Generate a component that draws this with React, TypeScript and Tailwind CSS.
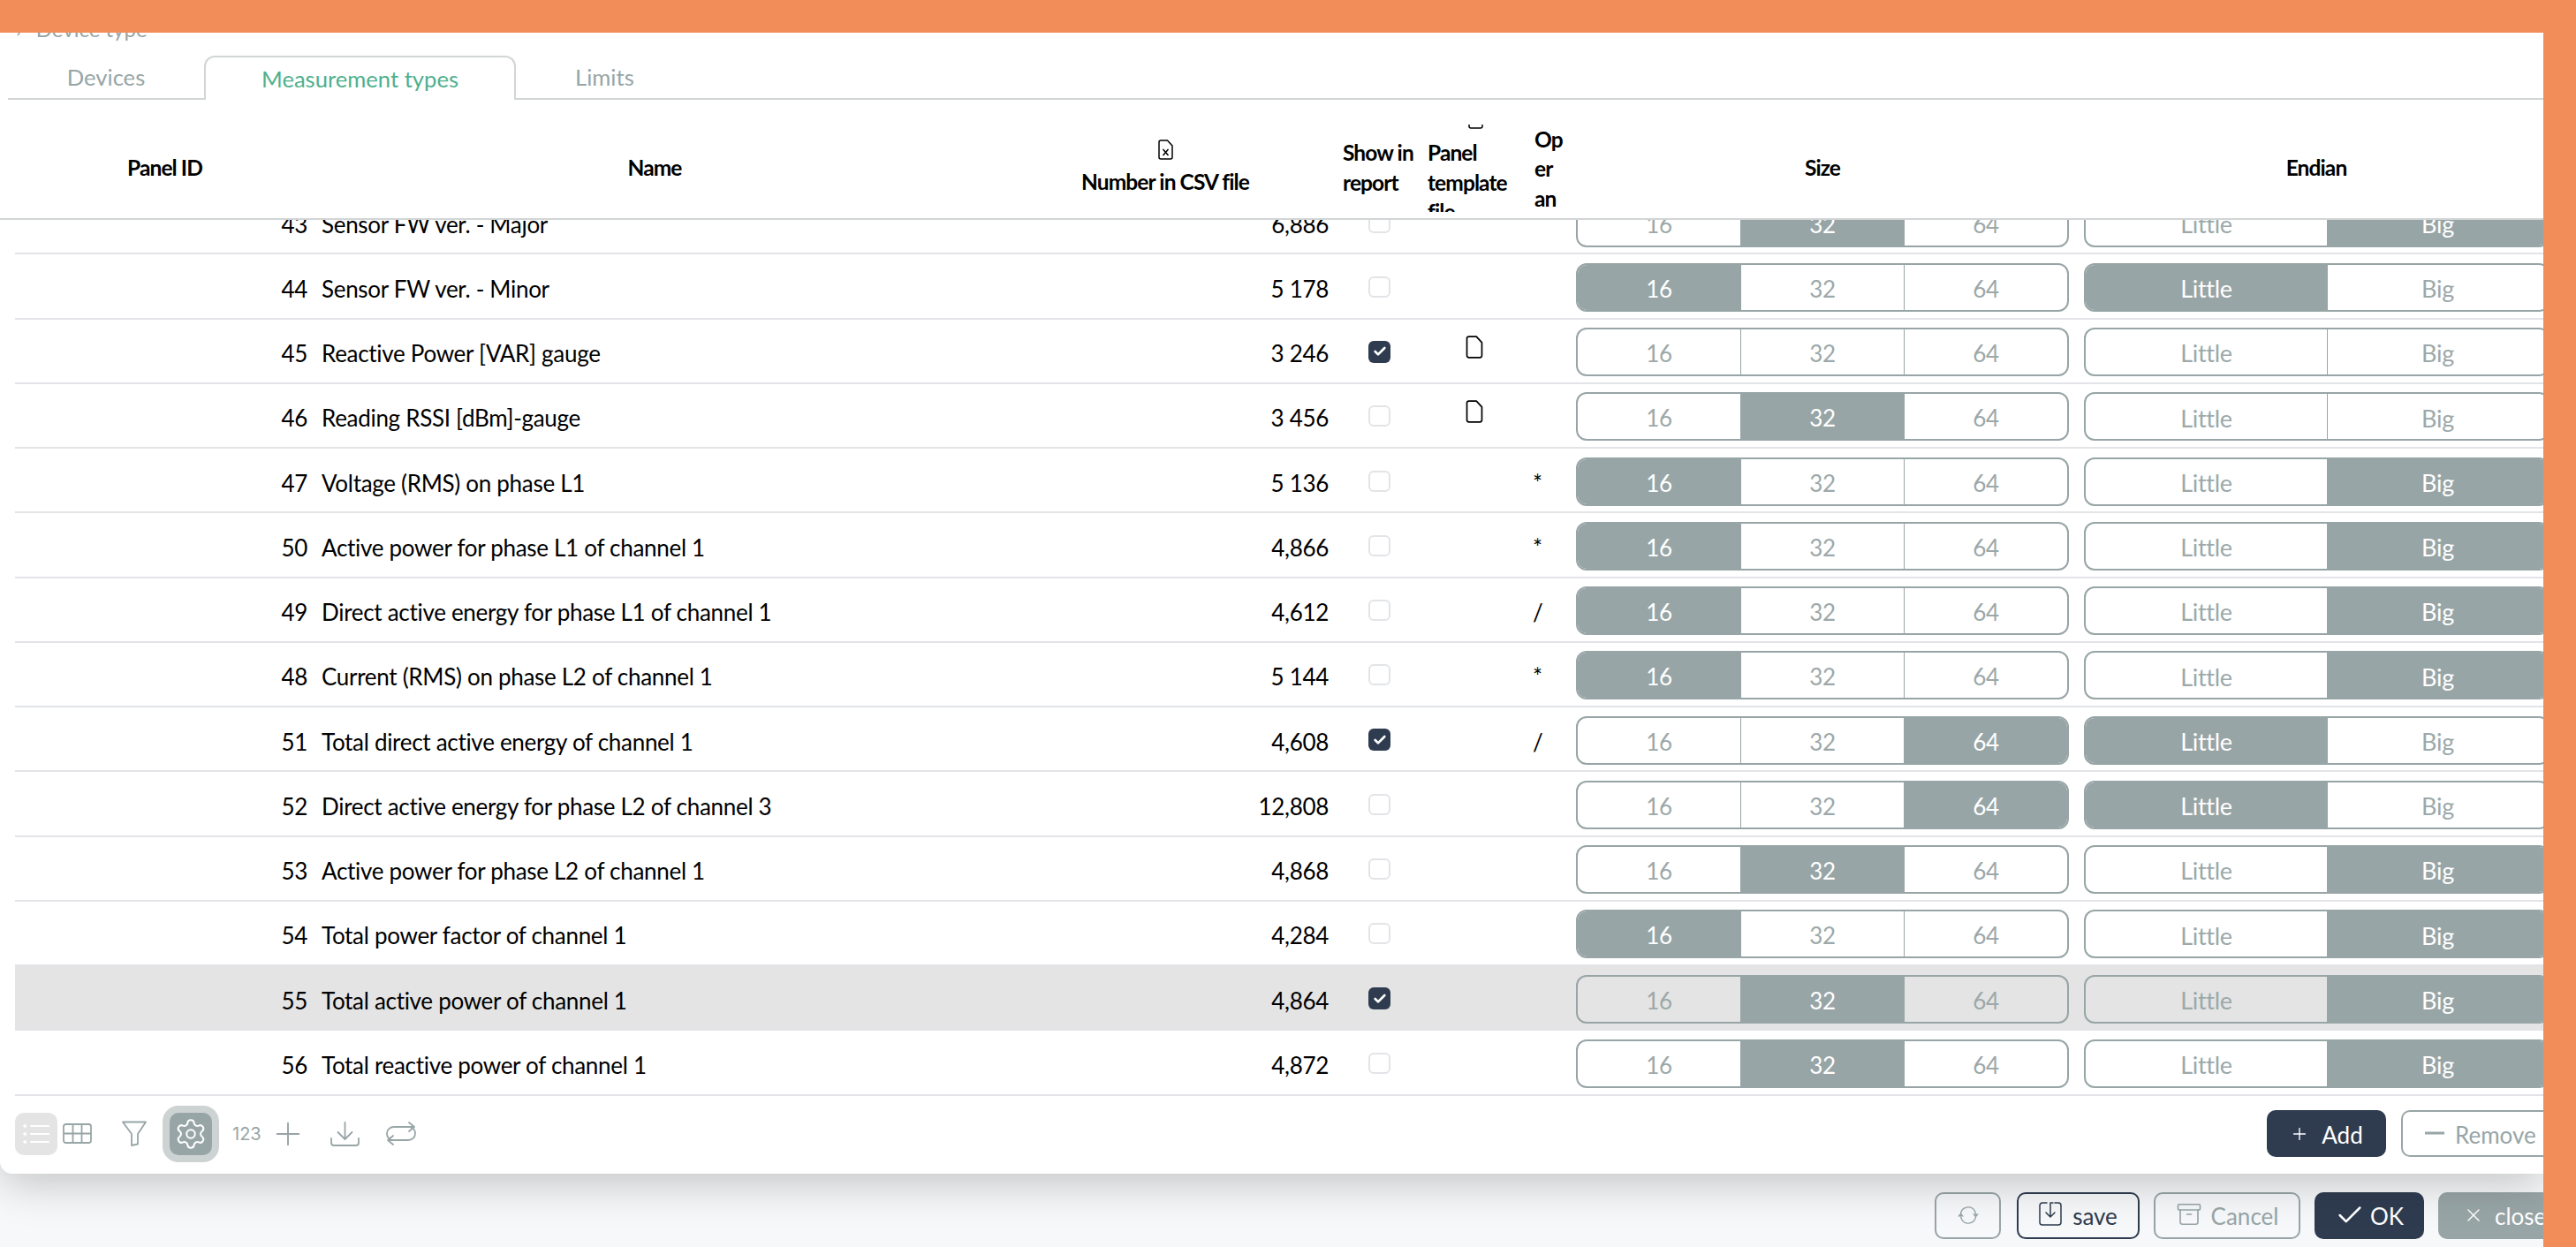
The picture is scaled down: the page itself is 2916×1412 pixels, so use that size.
import React from 'react';
import { Archive, Check, Plus, Settings, X } from 'lucide-react';

type Row = {
  id: number;
  name: string;
  csv: string;
  report?: boolean;
  file?: boolean;
  op?: string;
  size?: string;
  endian?: string;
  active?: boolean;
};

const rows: Row[] = [
  { id: 43, name: 'Sensor FW ver. - Major', csv: '6,886', size: '32', endian: 'Big' },
  { id: 44, name: 'Sensor FW ver. - Minor', csv: '5 178', size: '16', endian: 'Little' },
  { id: 45, name: 'Reactive Power [VAR] gauge', csv: '3 246', report: true, file: true },
  { id: 46, name: 'Reading RSSI [dBm]-gauge', csv: '3 456', file: true, size: '32' },
  { id: 47, name: 'Voltage (RMS) on phase L1', csv: '5 136', op: '*', size: '16', endian: 'Big' },
  { id: 50, name: 'Active power for phase L1 of channel 1', csv: '4,866', op: '*', size: '16', endian: 'Big' },
  { id: 49, name: 'Direct active energy for phase L1 of channel 1', csv: '4,612', op: '/', size: '16', endian: 'Big' },
  { id: 48, name: 'Current (RMS) on phase L2 of channel 1', csv: '5 144', op: '*', size: '16', endian: 'Big' },
  { id: 51, name: 'Total direct active energy of channel 1', csv: '4,608', report: true, op: '/', size: '64', endian: 'Little' },
  { id: 52, name: 'Direct active energy for phase L2 of channel 3', csv: '12,808', size: '64', endian: 'Little' },
  { id: 53, name: 'Active power for phase L2 of channel 1', csv: '4,868', size: '32', endian: 'Big' },
  { id: 54, name: 'Total power factor of channel 1', csv: '4,284', size: '16', endian: 'Big' },
  { id: 55, name: 'Total active power of channel 1', csv: '4,864', report: true, size: '32', endian: 'Big', active: true },
  { id: 56, name: 'Total reactive power of channel 1', csv: '4,872', size: '32', endian: 'Big' },
];

const columns = 'grid grid-cols-[339px_770px_386px_96px_121px_46px_576px_566px]';

function DocIcon({ width, height, cross }: { width: number; height: number; cross?: boolean }) {
  return (
    <svg width={width} height={height} viewBox="0 0 17 23" fill="none" stroke="currentColor" strokeWidth="1.5" strokeLinejoin="round" className="shrink-0">
      <path d="M3 1h7.5L16 7v13a2 2 0 0 1-2 2H3a2 2 0 0 1-2-2V3a2 2 0 0 1 2-2z" />
      {cross && <path d="M5.5 11l6 7M11.5 11l-6 7" />}
    </svg>
  );
}

function Segments({ items, value, width, big }: { items: string[]; value?: string; width: string; big?: boolean }) {
  return (
    <div className={`flex h-[55px] shrink-0 overflow-hidden rounded-[12px] border-2 border-[#98a5a6] ${width}`}>
      {items.map((item, i) => (
        <div
          key={item}
          className={`flex items-center justify-center pt-[4px] ${big ? 'text-[27px]' : 'text-[26px]'} ${
            big && i === 0 ? 'w-[273px] shrink-0' : 'flex-1'
          } ${item === value ? 'bg-[#98a5a6] text-white' : 'text-[#9ca8a9]'} ${i > 0 ? 'border-l border-[#98a5a6]' : ''}`}
        >
          {item}
        </div>
      ))}
    </div>
  );
}

function TableRow({ row }: { row: Row }) {
  return (
    <div className={`${columns} h-[73.25px] items-center border-b-2 border-[#e2e4e7] text-[26px] tracking-[-0.3px] text-black ${row.active ? 'bg-[#e4e4e4]' : ''}`}>
      <div className="pt-[7px] pr-2 text-right">{row.id}</div>
      <div className="pt-[7px] pl-2 whitespace-nowrap">{row.name}</div>
      <div className="pt-[7px] pr-2 text-right">{row.csv}</div>
      <div className="pt-[2px] pl-[37px]">
        {row.report ? (
          <div className="flex h-[25px] w-[25px] items-center justify-center rounded-[6px] bg-[#2f3c50]">
            <Check size={16} strokeWidth={4} className="text-white" />
          </div>
        ) : (
          <div className="h-[24px] w-[25px] rounded-[6px] border-2 border-[#e2e4e7] bg-white" />
        )}
      </div>
      <div className="pb-[9px] pl-[51px]">
        {row.file && <DocIcon width={20} height={26} />}
      </div>
      <div className="pt-[7px] pl-[6px]">{row.op}</div>
      <div className="pt-[3px] pl-[9px]">
        <Segments items={['16', '32', '64']} value={row.size} width="w-[558px]" />
      </div>
      <div className="pt-[3px] pl-2">
        <Segments items={['Little', 'Big']} value={row.endian} width="w-[527px]" big />
      </div>
    </div>
  );
}

export default function App() {
  return (
    <div className="flex h-[1412px] w-[2916px] flex-col overflow-hidden border-t-[37px] border-r-[37px] border-[#f28c58] bg-[#f6f8fa] font-['Lato',sans-serif]">
      {/* dialog */}
      <div className="relative z-10 flex h-[1292px] w-full shrink-0 flex-col overflow-hidden rounded-bl-[14px] bg-white shadow-[0_10px_50px_rgba(0,0,0,0.22)]">
        <div className="h-[26px] overflow-hidden">
          <div className="-mt-[19px] flex gap-[16px] pl-[18px] text-[24px] leading-[30px] text-[#98a5a6]">
            <span>›</span>
            <span>Device type</span>
          </div>
        </div>

        {/* tabs */}
        <div className="flex h-[50px] w-full text-[25.6px] text-[#98a5a6]">
          <div className="ml-[9px] flex w-[222px] items-center justify-center border-b-2 border-[#d2d5d6] pt-[1px]">Devices</div>
          <div className="flex w-[353px] items-center justify-center rounded-t-[12px] border-2 border-b-0 border-[#d2d5d6] text-[#4fb08c]">
            Measurement types
          </div>
          <div className="flex flex-1 items-center border-b-2 border-[#d2d5d6] pt-[1px] pl-[67px]">Limits</div>
        </div>

        {/* table head */}
        <div className="h-[136px] shrink-0 border-b-2 border-[#d2d5d6] pt-[20px] pl-[17px] text-[24.5px] leading-[33.6px] font-bold tracking-[-0.9px] text-black">
          <div className={`${columns} h-full items-center`}>
            <div className="text-center">Panel ID</div>
            <div className="text-center">Name</div>
            <div className="flex flex-col items-center">
              <DocIcon width={17} height={23} cross />
              <div className="mt-[8px]">Number in CSV file</div>
            </div>
            <div className="pr-1 pl-2">Show in report</div>
            <div className="flex h-[99px] flex-col justify-center overflow-hidden pr-1 pl-2">
              <div className="mb-[10px] flex shrink-0 justify-center">
                <DocIcon width={17} height={23} />
              </div>
              <div className="shrink-0">Panel template file</div>
            </div>
            <div className="h-[99px] overflow-hidden pl-[8px]">
              <div className="w-[34px]">Op<wbr />er<wbr />an<wbr />d</div>
            </div>
            <div className="text-center">Size</div>
            <div className="pr-[24px] text-center">Endian</div>
          </div>
        </div>

        {/* rows */}
        <div className="h-[992px] shrink-0 overflow-hidden">
          <div className="-mt-[34px] ml-[17px]">
            {rows.map((row) => (
              <TableRow key={row.id} row={row} />
            ))}
          </div>
        </div>

        {/* toolbar */}
        <div className="flex flex-1 items-center pb-[3px] pl-[17px] text-[#98a5a6]">
          <div className="flex h-[48px] w-[48px] items-center justify-center rounded-[10px] bg-[#e4e4e4] text-white">
            <svg width="30" height="24" viewBox="0 0 30 24" fill="none" stroke="currentColor" strokeWidth="2" strokeLinecap="round">
              <path d="M9 3h20M9 12h20M9 21h20" />
              <path d="M2 3h.5M2 12h.5M2 21h.5" strokeWidth="3.5" />
            </svg>
          </div>
          <svg width="33" height="23" viewBox="0 0 33 23" fill="none" stroke="currentColor" strokeWidth="1.8" className="ml-[6px]">
            <rect x="1" y="1" width="31" height="21" rx="2.5" />
            <path d="M11.5 1v21M21.5 1v21M1 11.5h31" />
          </svg>
          <svg width="28" height="29" viewBox="0 0 28 29" fill="none" stroke="currentColor" strokeWidth="1.8" strokeLinejoin="round" className="ml-[34px]">
            <path d="M1 1.5h26L18 15v11.5l-7 1.500V15z" />
          </svg>
          <div className="ml-[18px] flex h-[64px] w-[64px] items-center justify-center rounded-[18px] bg-[#cdd3d3]">
            <div className="flex h-[48px] w-[48px] items-center justify-center rounded-[10px] bg-[#98a5a6]">
              <Settings size={38} strokeWidth={1.3} className="text-white" />
            </div>
          </div>
          <div className="ml-[15px] font-['Inter',sans-serif] text-[20px]">123</div>
          <Plus size={42} strokeWidth={1.1} className="ml-[9px]" />
          <svg width="33" height="28" viewBox="0 0 33 28" fill="none" stroke="currentColor" strokeWidth="1.8" strokeLinecap="round" strokeLinejoin="round" className="ml-[27px]">
            <path d="M16.500 1v19M8.500 12l8 8 8-8" />
            <path d="M1 19v5a3 3 0 0 0 3 3h25a3 3 0 0 0 3-3v-5" />
          </svg>
          <svg width="34" height="27" viewBox="0 0 34 27" fill="none" stroke="currentColor" strokeWidth="1.8" strokeLinecap="round" strokeLinejoin="round" className="ml-[30px]">
            <path d="M5 20c-2.500-1-4-3.500-4-6.500C1 9 4.500 6 9 6h21" />
            <path d="M26 1l6 5-6 5" />
            <path d="M29 7c2.500 1 4 3.500 4 6.500 0 4.500-3.500 7.500-8 7.500H4" />
            <path d="M8 16l-6 5 6 5" />
          </svg>
          <div className="ml-auto flex h-[53px] w-[135px] items-center justify-center gap-[14px] rounded-[10px] bg-[#2f3c50] text-[26px] text-white">
            <Plus size={22} strokeWidth={1.5} />
            <span className="pt-[3px]">Add</span>
          </div>
          <div className="ml-[17px] flex h-[53px] w-[161px] shrink-0 items-center gap-[5px] rounded-l-[10px] border-2 border-r-0 border-[#98a5a6] pl-[18px] text-[26px]">
            <svg width="36" height="36" viewBox="0 0 36 36" fill="none" stroke="currentColor" strokeWidth="3" className="shrink-0">
              <path d="M7 17h22" />
            </svg>
            <span className="pt-[3px] whitespace-nowrap">Remove</span>
          </div>
        </div>
      </div>

      {/* footer */}
      <div className="flex flex-1 items-center justify-end overflow-hidden pt-[11px] text-[26px] text-[#98a5a6]">
        <div className="flex h-[53px] w-[75px] shrink-0 items-center justify-center rounded-[10px] border-2 border-[#98a5a6]">
          <svg width="26" height="22" viewBox="0 0 26 22" fill="none" stroke="currentColor" strokeWidth="1.4">
            <path d="M4.500 10a8.500 8.500 0 0 1 16-3.500l1 3" />
            <path d="M21.500 12a8.500 8.500 0 0 1-16 3.500l-1-3" />
            <path d="M18 9.500h7l-3.500 4zM1 12.500h7l-3.500-4z" fill="currentColor" stroke="none" />
          </svg>
        </div>
        <div className="ml-[18px] flex h-[53px] w-[139px] shrink-0 items-center justify-center gap-[12px] rounded-[10px] border-2 border-[#2f3c50] text-[#2f3c50]">
          <svg width="26" height="27" viewBox="0 0 26 27" fill="none" stroke="currentColor" strokeWidth="1.5" strokeLinecap="round" strokeLinejoin="round" className="mb-[3px]">
            <path d="M9 1H4a3 3 0 0 0-3 3v19a3 3 0 0 0 3 3h18a3 3 0 0 0 3-3V4a3 3 0 0 0-3-3h-4" />
            <path d="M13 1h3M13 1v16M8 12l5 5 5-5" />
          </svg>
          <span className="pt-[3px]">save</span>
        </div>
        <div className="ml-[16px] flex h-[53px] w-[166px] shrink-0 items-center justify-center gap-[10px] rounded-[10px] border-2 border-[#98a5a6]">
          <Archive size={30} strokeWidth={1.3} className="mb-[3px]" />
          <span className="pt-[3px]">Cancel</span>
        </div>
        <div className="ml-[16px] flex h-[53px] w-[124px] shrink-0 items-center justify-center gap-[6px] rounded-[10px] bg-[#2f3c50] text-white">
          <Check size={34} strokeWidth={1.8} />
          <span className="pt-[3px]">OK</span>
        </div>
        <div className="ml-[16px] flex h-[53px] w-[119px] shrink-0 items-center gap-[12px] rounded-l-[10px] bg-[#98a5a6] pl-[28px] text-white">
          <X size={24} strokeWidth={1.4} className="shrink-0" />
          <span className="pt-[3px]">close</span>
        </div>
      </div>
    </div>
  );
}
